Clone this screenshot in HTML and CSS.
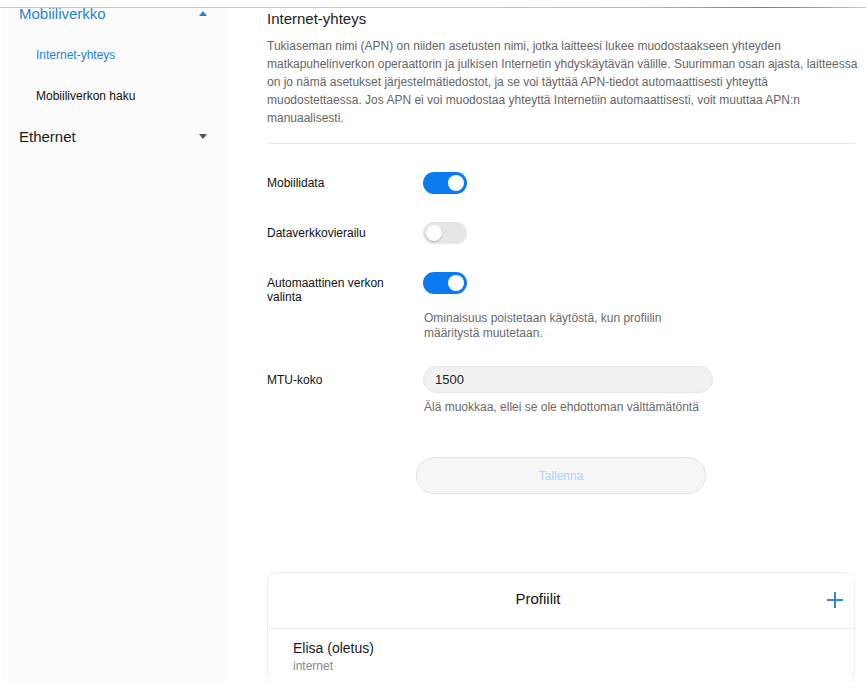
FILE: index.html
```html
<!DOCTYPE html>
<html lang="fi">
<head>
<meta charset="utf-8">
<title>Internet-yhteys</title>
<link rel="stylesheet" href="styles.css">
</head>
<body>
<div class="topbar"><div class="topline"></div></div>
<div class="layout">
  <aside class="sidebar">
    <ul class="nav">
      <li class="nav-group active"><span>Mobiiliverkko</span><span class="caret caret-up"></span></li>
      <li class="nav-sub active">Internet-yhteys</li>
      <li class="nav-sub">Mobiiliverkon haku</li>
      <li class="nav-group"><span>Ethernet</span><span class="caret caret-down"></span></li>
    </ul>
  </aside>
  <main class="main">
    <h1 class="title">Internet-yhteys</h1>
    <p class="intro">Tukiaseman nimi (APN) on niiden asetusten nimi, jotka laitteesi lukee muodostaakseen yhteyden<br>matkapuhelinverkon operaattorin ja julkisen Internetin yhdyskäytävän välille. Suurimman osan ajasta, laitteessa<br>on jo nämä asetukset järjestelmätiedostot, ja se voi täyttää APN-tiedot automaattisesti yhteyttä<br>muodostettaessa. Jos APN ei voi muodostaa yhteyttä Internetiin automaattisesti, voit muuttaa APN:n<br>manuaalisesti.</p>
    <div class="divider"></div>

    <div class="row row-first">
      <div class="label">Mobiilidata</div>
      <div class="switch on"><span class="knob"></span></div>
    </div>
    <div class="row">
      <div class="label">Dataverkkovierailu</div>
      <div class="switch"><span class="knob"></span></div>
    </div>
    <div class="row">
      <div class="label">Automaattinen verkon valinta</div>
      <div class="switch on"><span class="knob"></span></div>
    </div>
    <div class="hint hint-auto">Ominaisuus poistetaan käytöstä, kun profiilin määritystä muutetaan.</div>

    <div class="row row-mtu">
      <div class="label label-mtu">MTU-koko</div>
      <div class="input">1500</div>
    </div>
    <div class="hint hint-mtu">Älä muokkaa, ellei se ole ehdottoman välttämätöntä</div>

    <div class="save-wrap"><button class="save" type="button">Tallenna</button></div>

    <section class="card">
      <div class="card-head">
        <span class="card-title">Profiilit</span>
        <svg class="plus" width="18" height="18" viewBox="0 0 18 18"><path d="M9 1v16M1 9h16" stroke="#2e8ad6" stroke-width="2" fill="none"/></svg>
      </div>
      <div class="profile">
        <div class="profile-name">Elisa (oletus)</div>
        <div class="profile-apn">internet</div>
      </div>
    </section>
  </main>
</div>
</body>
</html>
```

FILE: styles.css
```css
* { box-sizing: border-box; }
html, body { margin: 0; padding: 0; }
body {
  width: 866px;
  height: 688px;
  background: #ffffff;
  font-family: "Liberation Sans", Arial, sans-serif;
  color: #222;
  overflow: hidden;
}
.topbar { height: 8px; padding-top: 7px; background: #fff; position: relative; z-index: 2; }
.topline {
  height: 1px;
  background: linear-gradient(to right, #dcc6ae 0%, #dcc2ae 55%, #d7a9a0 75%, #c85a6a 88%, #d88a8a 95%, #e2c4b4 100%);
}
.layout {
  display: flex;
  height: 673px;
  overflow: hidden;
}
.sidebar {
  width: 225px;
  margin-left: 3px;
  background: #fcfcfc;
  flex: none;
}
.nav { list-style: none; margin: -15px 0 0 0; padding: 0; }
.nav li { height: 41px; display: flex; align-items: center; }
.nav-group {
  padding-left: 16px;
  padding-right: 21px;
  justify-content: space-between;
  font-size: 15px;
  color: #1a1a1a;
}
.nav-group.active { color: #1f83d6; }
.nav-sub { padding-left: 33px; font-size: 12px; color: #111; }
.nav-sub.active { color: #1f83d6; }
.caret { width: 0; height: 0; border-left: 4.5px solid transparent; border-right: 4.5px solid transparent; }
.caret-up { border-bottom: 5px solid #1f83d6; }
.caret-down { border-top: 5px solid #555; }

.main {
  width: 588px;
  margin-left: 39px;
  flex: none;
}
.title {
  margin: 0;
  font-size: 15px;
  font-weight: normal;
  line-height: 22px;
  color: #1c1c1c;
}
.intro {
  margin: 7px 0 0 0;
  font-size: 12px;
  line-height: 18px;
  color: #666;
  white-space: nowrap;
}
.divider { height: 1px; background: #e8e8e8; margin-top: 16px; }

.row { display: flex; align-items: flex-start; margin-top: 28px; }
.row-first { margin-top: 28px; }
.label {
  width: 156px;
  padding-top: 4px;
  padding-right: 16px;
  font-size: 12px;
  line-height: 14px;
  color: #111;
  flex: none;
}
.switch {
  width: 44px;
  height: 22px;
  border-radius: 11px;
  background: #e6e6e6;
  position: relative;
  flex: none;
}
.switch.on { background: #0b7af0; }
.knob {
  position: absolute;
  top: 3px;
  left: 3px;
  width: 16px;
  height: 16px;
  border-radius: 50%;
  background: #fff;
  box-shadow: 0 1px 2px rgba(0,0,0,0.25);
}
.switch.on .knob { left: 25px; box-shadow: none; }

.hint {
  margin-left: 157px;
  font-size: 12px;
  line-height: 15px;
  color: #6a6a6a;
}
.hint-auto { margin-top: 7px; width: 260px; }
.row-mtu { margin-top: 25px; align-items: center; }
.label-mtu { padding-top: 0; }
.input {
  width: 290px;
  height: 27px;
  border-radius: 14px;
  background: #f1f1f1;
  border: 1px solid #e6e6e6;
  font-size: 13px;
  line-height: 25px;
  padding-left: 11px;
  color: #222;
}
.hint-mtu { margin-top: 7px; }

.save-wrap { margin-top: 42px; padding-left: 149px; }
.save {
  display: block;
  width: 290px;
  height: 37px;
  border-radius: 19px;
  border: 1px solid #e2e2e2;
  background: #f6f6f6;
  color: #a9d4f3;
  font-family: "Liberation Sans", Arial, sans-serif;
  font-size: 12px;
  padding: 0;
}

.card {
  margin-top: 78px;
  border: 1px solid #ececec;
  border-radius: 10px;
  background: #fff;
}
.card-head {
  height: 56px;
  display: flex;
  align-items: center;
  justify-content: center;
  position: relative;
  border-bottom: 1px solid #ececec;
  padding-right: 46px;
  padding-bottom: 4px;
}
.card-title { font-size: 15px; color: #111; }
.plus { position: absolute; right: 10px; top: 18px; }
.profile { padding: 10px 0 8px 25px; }
.profile-name { font-size: 14px; line-height: 18px; color: #1a1a1a; }
.profile-apn { font-size: 12px; line-height: 16px; color: #888; margin-top: 1px; }
```
